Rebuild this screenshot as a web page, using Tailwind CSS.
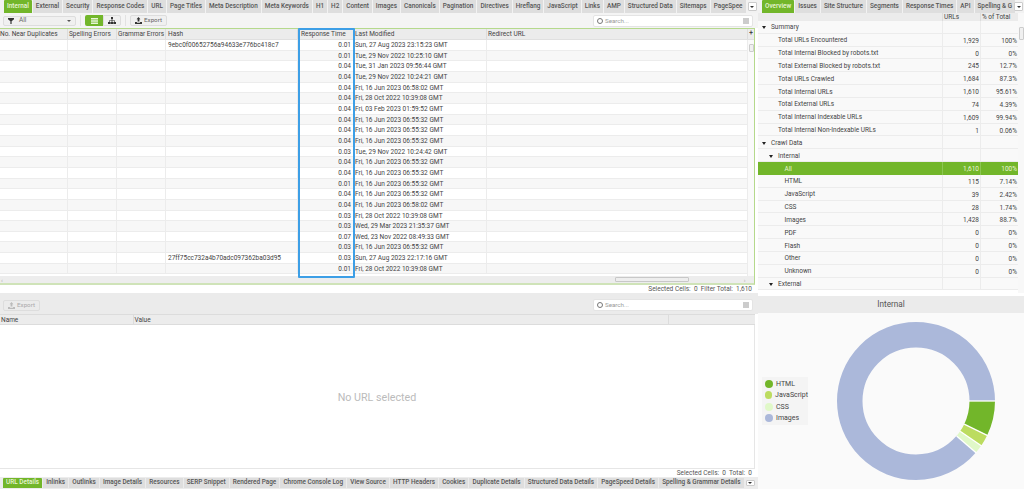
<!DOCTYPE html>
<html lang="en">

<head>
  <meta charset="UTF-8" />
  <title>SEO Spider</title>
  <script src="https://cdn.jsdelivr.net/npm/@tailwindcss/browser@4"></script>
</head>

<body class="bg-white h-[489px] w-[1024px] overflow-hidden font-['Roboto',sans-serif] text-[6.500px] text-[#444]">
  <div class="flex h-full">

    <!-- left side -->
    <div class="w-[758px] flex flex-col shrink-0">
      <div id="topTabs" class="h-[13px] flex items-stretch pl-[4px] pr-[2px] gap-[1px] bg-[#f2f2f2] font-medium text-[6.400px] whitespace-nowrap overflow-hidden"></div>

      <div class="h-[15px] flex items-center bg-[#f4f4f4] pl-[3px] pr-[3px]">
        <div class="w-[73px] h-[10px] bg-[#f0f0f0] border border-[#ddd] rounded-[2px] flex items-center px-[4px] gap-[5px]">
          <svg class="w-[6px] h-[6px]" viewBox="0 0 10 10"><path d="M0 0h10v2L6 5.500V10H4V5.500L0 2z" fill="#333"/></svg>
          <span class="text-[#666] leading-[11px]">All</span>
          <span class="ml-auto w-0 h-0 border-x-[2px] border-x-transparent border-t-[2px] border-t-[#555]"></span>
        </div>
        <div class="w-[1px] h-[11px] bg-[#e2e2e2] ml-[4px] mr-[4px]"></div>
        <div class="w-[18px] h-[11px] bg-[#72b62a] rounded-l-[2px] flex items-center justify-center">
          <svg class="w-[7px] h-[6px]" viewBox="0 0 7 6"><path d="M0 0h7v1.500H0zM0 2.250h7v1.500H0zM0 4.500h7V6H0z" fill="#e8f5d8"/></svg>
        </div>
        <div class="w-[18px] h-[11px] bg-[#f0f0f0] border border-[#ddd] rounded-r-[2px] flex items-center justify-center">
          <svg class="w-[8px] h-[7px]" viewBox="0 0 8 7"><path d="M3 0h2v2H3zM3.600 2h.8v1.500H7V5h-.6V4H4.400v1h-.8V4H1.600v1H1V3.500h2.600zM0 5h2.500v2H0zM2.800 5h2.400v2H2.800zM5.500 5H8v2H5.500z" fill="#333"/></svg>
        </div>
        <div class="w-[1px] h-[11px] bg-[#e2e2e2] ml-[4px] mr-[4px]"></div>
        <div class="w-[37px] h-[11px] bg-[#f0f0f0] border border-[#ddd] rounded-[2px] flex items-center justify-center gap-[2px] text-[#666] text-[6.200px] leading-[11px]">
          <svg class="w-[7px] h-[7px]" viewBox="0 0 8 8"><path d="M4 0l2.200 2.500H5V5H3V2.500H1.800zM0 5.800h2.200v.7h3.600v-.7H8V8H0z" fill="#333"/></svg>
          Export
        </div>
        <div class="ml-auto w-[160px] h-[12px] bg-white border border-[#e4e4e4] rounded-[2px] flex items-center px-[3px] gap-[2px] mr-[2px] text-[#999] text-[6.200px] leading-[12px]">
          <span class="w-[6px] h-[6px] rounded-full border border-[#777]"></span>
          <span>Search...</span>
          <svg class="ml-auto w-[6px] h-[6px]" viewBox="0 0 6 6"><path d="M0 .5h6v1H0zM0 2.500h6v1H0zM0 4.500h6v1H0z" fill="#999"/></svg>
        </div>
      </div>

      <!-- main grid, the blue box sits on top of it -->
      <div class="relative h-[257px] w-[755px] border-t border-r border-b-2 border-[#b5d98c] border-b-[#cfe3b8] flex flex-col">
        <div class="flex h-[11px] bg-[#ececec] border-b border-[#e0e0e0] shrink-0 leading-[11px]">
          <div class="w-[68px] border-r border-[#dcdcdc] whitespace-nowrap">No. Near Duplicates</div>
          <div class="w-[49px] border-r border-[#dcdcdc] pl-[1px]">Spelling Errors</div>
          <div class="w-[49px] border-r border-[#dcdcdc] pl-[1px] whitespace-nowrap">Grammar Errors</div>
          <div class="w-[132px] border-r border-[#dcdcdc] pl-[2px]">Hash</div>
          <div class="w-[56px] border-r border-[#dcdcdc] pl-[3px]">Response Time</div>
          <div class="w-[133px] border-r border-[#dcdcdc] pl-[1px]">Last Modified</div>
          <div class="flex-1 pl-[1px]">Redirect URL</div>
          <div class="w-[7px] border-l border-[#dcdcdc] leading-[9px] text-center font-bold">+</div>
        </div>
        <div class="flex flex-1 min-h-0">
          <div id="mainRows" class="flex-1 overflow-hidden"></div>
          <div class="w-[7px] bg-[#fafafa] border-l border-[#ececec] flex flex-col items-center pt-[3px]">
            <div class="w-[5px] h-[8px] bg-[#f0f0f0] border border-[#ccc] rounded-[1px] mt-[1px]"></div>
          </div>
        </div>
        <div class="h-[7px] bg-[#ededed] shrink-0 relative flex items-center">
          <span class="ml-[1px] text-[#aaa] leading-[7px] text-[6px]">‹</span>
          <div class="ml-[612px] w-[74px] h-[5px] bg-[#eee] border border-[#c8c8c8] rounded-[1px]"></div>
          <span class="ml-[55px] text-[#aaa] leading-[7px] text-[6px]">›</span>
        </div>
        <div class="absolute left-[298px] top-[-1px] w-[57px] h-[250px] border-2 border-[#3d9fe6] rounded-[1px] pointer-events-none"></div>
      </div>

      <div class="h-[8px] flex items-center justify-end pr-[6px] leading-[9px] text-[#555] whitespace-pre">Selected Cells:  0  Filter Total:  1,610</div>

      <!-- details panel -->
      <div class="h-[21px] bg-[#ebebeb] flex items-end justify-between pl-[3px] pr-[5px] pb-[3px]">
        <div class="w-[37px] h-[11px] border border-[#ddd] rounded-[2px] flex items-center justify-center gap-[2px] text-[#aaa] text-[6.200px] leading-[11px]">
          <svg class="w-[7px] h-[7px]" viewBox="0 0 8 8"><path d="M4 0l2.200 2.500H5V5H3V2.500H1.800zM0 5.800h2.200v.7h3.600v-.7H8V8H0z" fill="#bbb"/></svg>
          Export
        </div>
        <div class="w-[160px] h-[12px] bg-white border border-[#e4e4e4] rounded-[2px] flex items-center px-[3px] gap-[2px] text-[#999] text-[6.200px] leading-[12px]">
          <span class="w-[6px] h-[6px] rounded-full border border-[#777]"></span>
          <span>Search...</span>
          <svg class="ml-auto w-[6px] h-[6px]" viewBox="0 0 6 6"><path d="M0 .5h6v1H0zM0 2.500h6v1H0zM0 4.500h6v1H0z" fill="#999"/></svg>
        </div>
      </div>
      <div class="flex h-[11px] bg-[#ececec] border-t border-b border-[#dcdcdc] mr-[3px] leading-[10px]">
        <div class="w-[133.500px] border-r border-[#dcdcdc] pl-[1px]">Name</div>
        <div class="w-[535px] border-r border-[#dcdcdc] pl-[1px]">Value</div>
      </div>
      <div class="h-[144px] border-r border-b border-[#e6e6e6] mr-[3px] pt-[3px] flex items-center justify-center text-[10.700px] text-[#bbb]">No URL selected</div>
      <div class="h-[8px] flex items-center justify-end pr-[6px] leading-[10px] text-[#555] whitespace-pre">Selected Cells:  0  Total:  0</div>
      <div id="bottomTabs" class="h-[12px] flex items-stretch pl-[3px] pr-[2px] pt-[1px] pb-[1px] gap-[1px] bg-[#ececec] font-medium text-[6.400px] whitespace-nowrap overflow-hidden"></div>
    </div>

    <!-- right side -->
    <div class="flex-1 flex flex-col min-w-0 bg-[#f2f2f2]">
      <div id="rightTabs" class="h-[13px] flex items-stretch pl-[4px] gap-[1px] font-medium text-[6.400px] whitespace-nowrap overflow-hidden"></div>
      <div class="h-[280px] flex shrink-0">
        <div class="w-[260px] flex flex-col">
          <div class="flex h-[8px] bg-[#ebebeb] leading-[8px] shrink-0">
            <div class="w-[185px] border-r border-[#dcdcdc]"></div>
            <div class="w-[38px] border-r border-[#dcdcdc] pl-[1px]">URLs</div>
            <div class="flex-1 pl-[1px]">% of Total</div>
          </div>
          <div id="overviewRows" class="flex-1 overflow-hidden bg-white"></div>
        </div>
        <div class="flex-1 bg-[#f8f8f8] flex justify-center">
          <div class="w-[5px] h-[13px] bg-[#f0f0f0] border border-[#ccc] rounded-[1px] mt-[14px]"></div>
        </div>
      </div>
      <div class="h-[3px] bg-white shrink-0"></div>
      <div class="h-[17px] bg-[#ebebeb] text-[8.200px] text-[#555] flex items-center justify-center shrink-0">Internal</div>
      <div class="flex-1 bg-[#fafafa] relative">
        <div class="absolute left-[4px] top-[64px] w-[46px] h-[48px] bg-[#f4f4f4] flex flex-col justify-center gap-[3.300px] pl-[3px] text-[7px]">
          <div class="flex items-center gap-[3px] leading-[8px]"><span class="w-[8px] h-[8px] rounded-full bg-[#72b62a]"></span>HTML</div>
          <div class="flex items-center gap-[3px] leading-[8px]"><span class="w-[8px] h-[8px] rounded-full bg-[#bcdc60]"></span>JavaScript</div>
          <div class="flex items-center gap-[3px] leading-[8px]"><span class="w-[8px] h-[8px] rounded-full bg-[#e0f8c8]"></span>CSS</div>
          <div class="flex items-center gap-[3px] leading-[8px]"><span class="w-[8px] h-[8px] rounded-full bg-[#abb8da]"></span>Images</div>
        </div>
        <svg class="absolute left-[78px] top-[8px] w-[160px] h-[160px]" viewBox="0 0 160 160">
          <g fill="none" stroke-width="25.500" transform="translate(80 80)">
            <circle r="66.250" stroke="#abb8da" pathLength="100" stroke-dasharray="88.700 11.300" stroke-dashoffset="-11.300"/>
            <circle r="66.250" stroke="#72b62a" pathLength="100" stroke-dasharray="7.140 92.860"/>
            <circle r="66.250" stroke="#bcdc60" pathLength="100" stroke-dasharray="2.420 97.580" stroke-dashoffset="-7.140"/>
            <circle r="66.250" stroke="#e0f8c8" pathLength="100" stroke-dasharray="1.740 98.260" stroke-dashoffset="-9.560"/>
            <g stroke="#fff" stroke-width="1.300">
              <path d="M53 0H79.500"/>
              <path d="M48.200 23.200L71.700 34.600"/>
              <path d="M44.100 30.200L65.700 45"/>
              <path d="M40.600 34.900L60.300 51.900"/>
            </g>
          </g>
        </svg>
      </div>
    </div>
  </div>

  <script>
    function tab(label, active) {
      const cls = active
        ? "bg-[#72b62a] text-[#e8f5d8] rounded-t-[1px]"
        : "bg-[#dedede] text-[#555]";
      return `<div class="px-[3px] flex items-center ${cls}">${label}</div>`;
    }

    function bottomTab(label, active) {
      const cls = active
        ? "bg-[#72b62a] text-[#e8f5d8] rounded-t-[1px]"
        : "bg-[#dedede] text-[#555]";
      return `<div class="px-[3.100px] flex items-center ${cls}">${label}</div>`;
    }

    const dropBtn = `<div class="w-[9px] my-[2px] ml-[1px] bg-white border border-[#ccc] rounded-[1px] flex items-center justify-center shrink-0"><span class="w-0 h-0 border-x-[2px] border-x-transparent border-t-[2px] border-t-[#333]"></span></div>`;
    const rightDropBtn = `<div class="w-[9px] my-[2px] -ml-[2px] bg-white border border-[#ccc] rounded-[1px] flex items-center justify-center shrink-0"><span class="w-0 h-0 border-x-[2px] border-x-transparent border-t-[2px] border-t-[#333]"></span></div>`;

    document.getElementById("topTabs").innerHTML =
      ["Internal", "External", "Security", "Response Codes", "URL", "Page Titles", "Meta Description", "Meta Keywords", "H1", "H2", "Content", "Images", "Canonicals", "Pagination", "Directives", "Hreflang", "JavaScript", "Links", "AMP", "Structured Data", "Sitemaps", "PageSpee"]
        .map((t, i) => tab(t, i === 0)).join("") + dropBtn;

    document.getElementById("bottomTabs").innerHTML =
      ["URL Details", "Inlinks", "Outlinks", "Image Details", "Resources", "SERP Snippet", "Rendered Page", "Chrome Console Log", "View Source", "HTTP Headers", "Cookies", "Duplicate Details", "Structured Data Details", "PageSpeed Details", "Spelling &amp; Grammar Details"]
        .map((t, i) => bottomTab(t, i === 0)).join("") + dropBtn;

    document.getElementById("rightTabs").innerHTML =
      ["Overview", "Issues", "Site Structure", "Segments", "Response Times", "API", "Spelling &amp; G"]
        .map((t, i) => tab(t, i === 0)).join("") + rightDropBtn;

    const mainRows = [
      ["9ebc0f00652756a94633e776bc418c7", "0.01", "Sun, 27 Aug 2023 23:15:23 GMT"],
      ["", "0.01", "Tue, 29 Nov 2022 10:25:10 GMT"],
      ["", "0.04", "Tue, 31 Jan 2023 09:56:44 GMT"],
      ["", "0.04", "Tue, 29 Nov 2022 10:24:21 GMT"],
      ["", "0.04", "Fri, 16 Jun 2023 06:58:02 GMT"],
      ["", "0.04", "Fri, 28 Oct 2022 10:39:08 GMT"],
      ["", "0.04", "Fri, 03 Feb 2023 01:59:52 GMT"],
      ["", "0.04", "Fri, 16 Jun 2023 06:55:32 GMT"],
      ["", "0.04", "Fri, 16 Jun 2023 06:55:32 GMT"],
      ["", "0.04", "Fri, 16 Jun 2023 06:55:32 GMT"],
      ["", "0.03", "Tue, 29 Nov 2022 10:24:42 GMT"],
      ["", "0.04", "Fri, 16 Jun 2023 06:55:32 GMT"],
      ["", "0.04", "Fri, 16 Jun 2023 06:55:32 GMT"],
      ["", "0.01", "Fri, 16 Jun 2023 06:55:32 GMT"],
      ["", "0.04", "Fri, 16 Jun 2023 06:55:32 GMT"],
      ["", "0.04", "Fri, 16 Jun 2023 06:58:02 GMT"],
      ["", "0.03", "Fri, 28 Oct 2022 10:39:08 GMT"],
      ["", "0.03", "Wed, 29 Mar 2023 21:35:37 GMT"],
      ["", "0.07", "Wed, 23 Nov 2022 08:49:33 GMT"],
      ["", "0.03", "Fri, 16 Jun 2023 06:55:32 GMT"],
      ["27ff75cc732a4b70adc097362ba03d95", "0.03", "Sun, 27 Aug 2023 22:17:16 GMT"],
      ["", "0.01", "Fri, 28 Oct 2022 10:39:08 GMT"]
    ];

    document.getElementById("mainRows").innerHTML = mainRows.map((r, i) => `
      <div class="flex h-[10.670px] leading-[11px] border-b border-[#ececec] ${i % 2 ? "bg-[#f7f7f7]" : "bg-white"}">
        <div class="w-[68px] border-r border-[#ececec]"></div>
        <div class="w-[49px] border-r border-[#ececec]"></div>
        <div class="w-[49px] border-r border-[#ececec]"></div>
        <div class="w-[132px] border-r border-[#ececec] pl-[2px] whitespace-nowrap">${r[0]}</div>
        <div class="w-[56px] border-r border-[#ececec] text-right pr-[2px]">${r[1]}</div>
        <div class="w-[133px] border-r border-[#ececec] pl-[1px] whitespace-nowrap">${r[2]}</div>
        <div class="flex-1"></div>
      </div>`).join("");

    const overview = [
      [1, "Summary", "", "", true],
      [2, "Total URLs Encountered", "1,929", "100%"],
      [2, "Total Internal Blocked by robots.txt", "0", "0%"],
      [2, "Total External Blocked by robots.txt", "245", "12.7%"],
      [2, "Total URLs Crawled", "1,684", "87.3%"],
      [2, "Total Internal URLs", "1,610", "95.61%"],
      [2, "Total External URLs", "74", "4.39%"],
      [2, "Total Internal Indexable URLs", "1,609", "99.94%"],
      [2, "Total Internal Non-Indexable URLs", "1", "0.06%"],
      [1, "Crawl Data", "", "", true],
      [2, "Internal", "", "", true],
      [3, "All", "1,610", "100%"],
      [3, "HTML", "115", "7.14%"],
      [3, "JavaScript", "39", "2.42%"],
      [3, "CSS", "28", "1.74%"],
      [3, "Images", "1,428", "88.7%"],
      [3, "PDF", "0", "0%"],
      [3, "Flash", "0", "0%"],
      [3, "Other", "0", "0%"],
      [3, "Unknown", "0", "0%"],
      [2, "External", "", "", true]
    ];

    const indents = { 1: "pl-[4px]", 2: "pl-[20px]", 3: "pl-[26.500px]" };
    const headIndents = { 1: "pl-[4px]", 2: "pl-[11px]" };

    document.getElementById("overviewRows").innerHTML = overview.map((r) => {
      const selected = r[1] === "All";
      const arrow = r[4] ? `<span class="w-0 h-0 border-x-[2px] border-x-transparent border-t-[3px] border-t-[#222] mr-[5px] shrink-0"></span>` : "";
      const rowCls = selected ? "bg-[#72b62a] text-[#e8f5d8]" : "bg-[#f9f9f9] border-b border-[#ececec]";
      const lineCls = selected ? "border-[#8cc653]" : "border-[#ececec]";
      return `
      <div class="flex h-[12.830px] leading-[15px] ${rowCls}">
        <div class="w-[185px] border-r ${lineCls} flex items-center pt-[2px] ${r[4] ? headIndents[r[0]] : indents[r[0]]} whitespace-nowrap">${arrow}${r[1]}</div>
        <div class="w-[38px] border-r ${lineCls} text-right pr-[1px]">${r[2]}</div>
        <div class="flex-1 text-right pr-[1px]">${r[3]}</div>
      </div>`;
    }).join("");
  </script>
</body>

</html>
